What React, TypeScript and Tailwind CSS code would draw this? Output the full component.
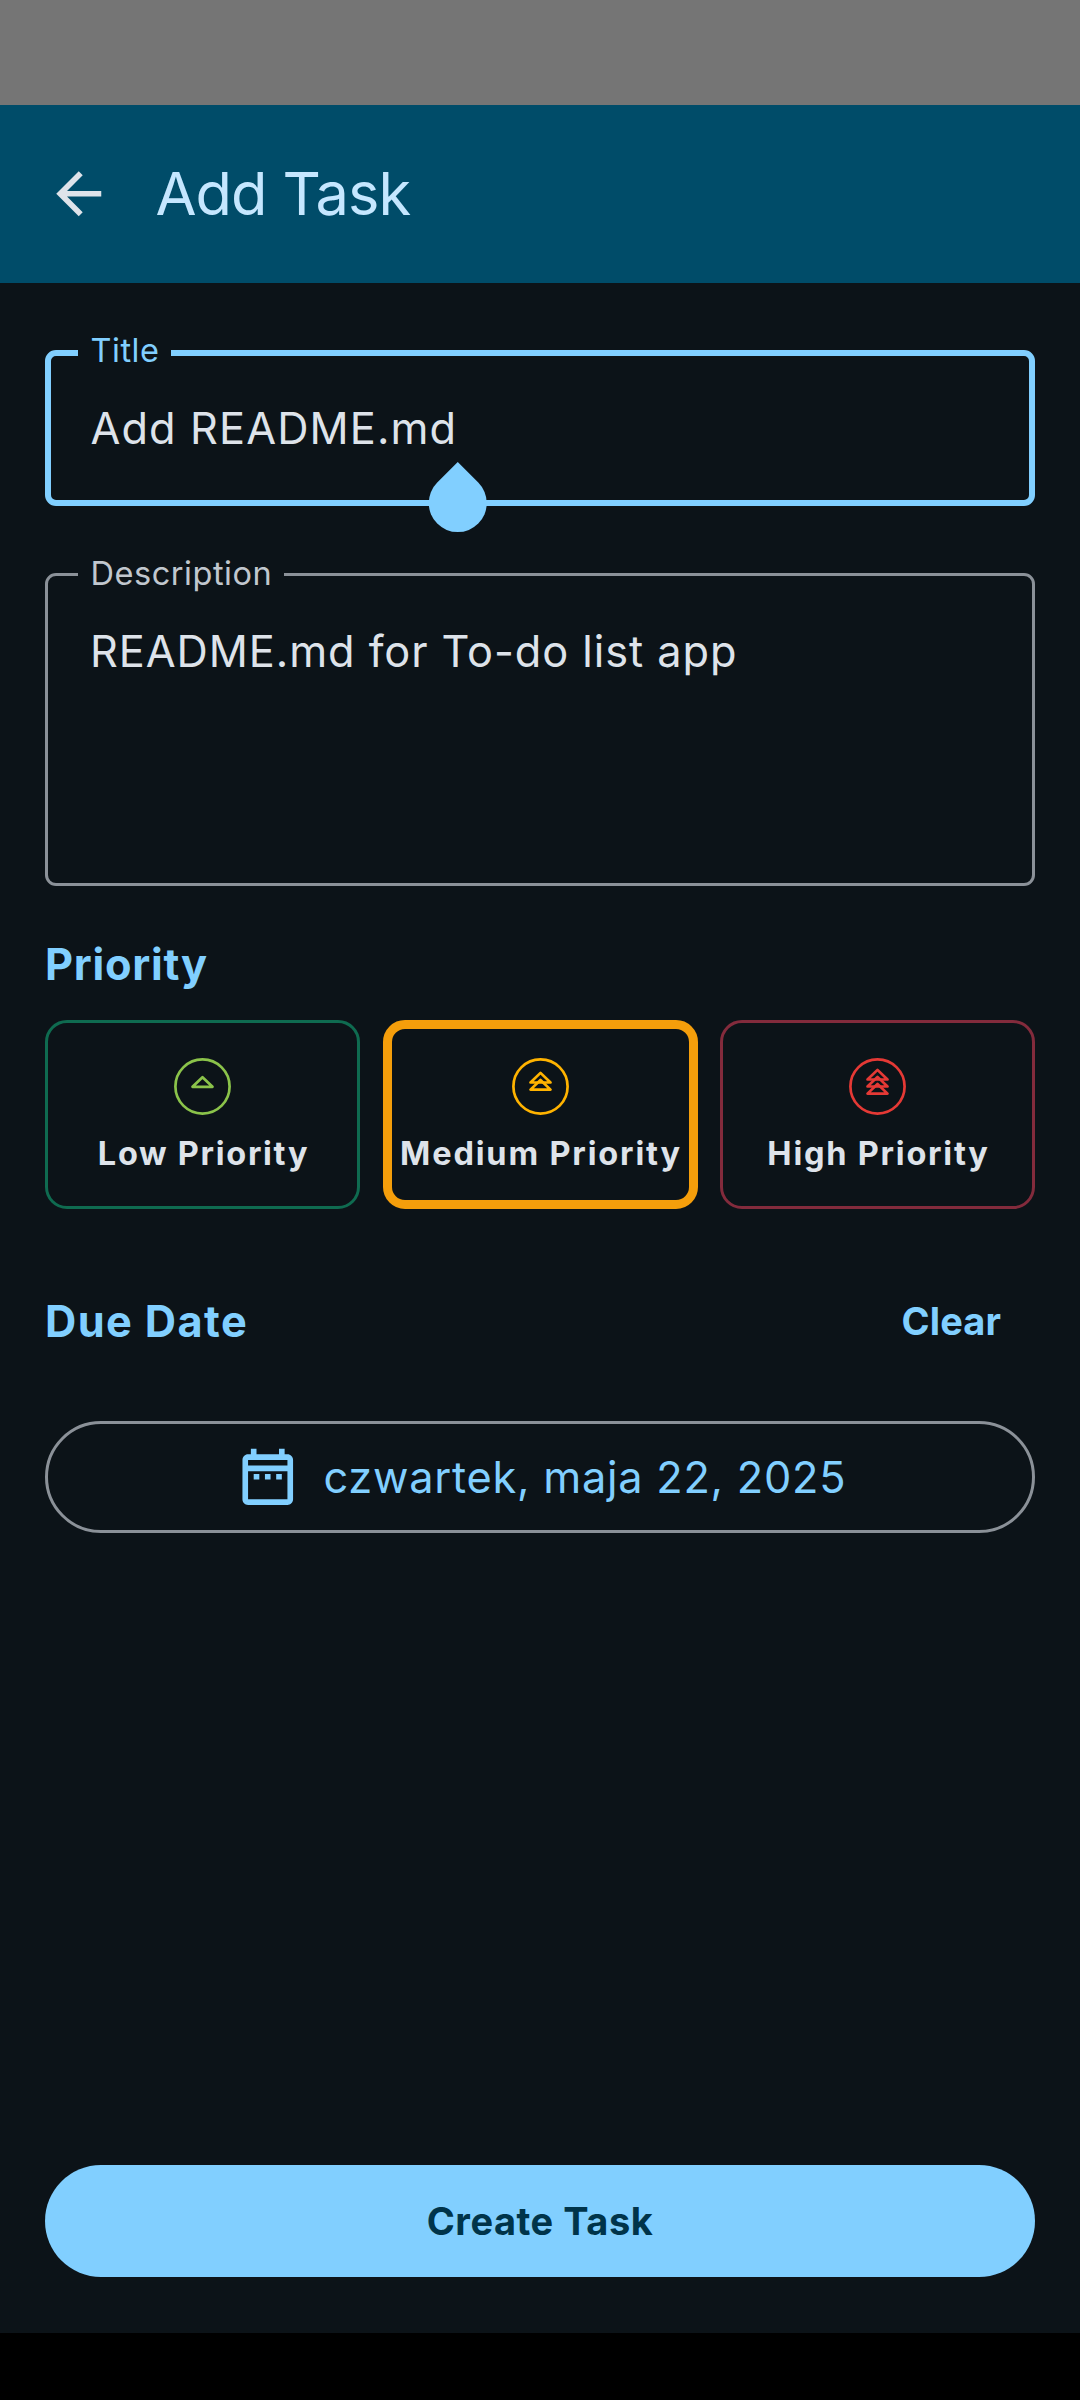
import clsx from 'clsx';

type PriorityOption = {
  label: string;
  card: string;
  icon: string;
  spacing: string;
  /** Baseline of every stacked triangle, in icon units. */
  bases: number[];
};

const PRIORITIES: PriorityOption[] = [
  {
    label: 'Low Priority',
    card: 'border-[3px] border-[#0f6b50]',
    icon: 'text-[#8bc34a]',
    spacing: 'tracking-[1.7px]',
    bases: [28.8],
  },
  {
    label: 'Medium Priority',
    card: 'border-[9px] border-[#f59e0b]',
    icon: 'text-[#ffb300]',
    spacing: 'tracking-[1.84px]',
    bases: [24.5, 31.6],
  },
  {
    label: 'High Priority',
    card: 'border-[3px] border-[#832b3c]',
    icon: 'text-[#e53935]',
    spacing: 'tracking-[1.77px]',
    bases: [21.5, 28.5, 35.6],
  },
];

function PriorityIcon({ bases, className }: { bases: number[]; className: string }) {
  return (
    <svg
      viewBox="0 0 57 57"
      className={clsx('size-[57px] shrink-0', className)}
      fill="none"
      stroke="currentColor"
      strokeWidth="2.7"
      strokeLinejoin="round"
    >
      <circle cx="28.5" cy="28.5" r="27.1" />
      {bases.map((y) => (
        <path key={y} d={`M28.5 ${y - 9.6}L38.5 ${y}H18.5Z`} />
      ))}
    </svg>
  );
}

function PriorityCard({ option }: { option: PriorityOption }) {
  return (
    <button
      className={clsx(
        'flex h-[189px] flex-col items-center justify-center gap-[19px] rounded-[22px] pt-[3px]',
        option.card,
      )}
    >
      <PriorityIcon bases={option.bases} className={option.icon} />
      <span
        className={clsx(
          'pl-0.5 text-[32.5px] leading-10 font-bold whitespace-nowrap text-[#dee3ea]',
          option.spacing,
        )}
      >
        {option.label}
      </span>
    </button>
  );
}

export default function App() {
  return (
    <div className="flex h-[2400px] w-[1080px] flex-col bg-[#0c1318] font-['Inter',sans-serif] text-[#dee3ea]">
      <div className="h-[105px] bg-[#757575]" />

      <header className="flex h-[178px] items-center gap-[43px] bg-[#004c69] pl-[45px]">
        <svg viewBox="0 0 24 24" className="size-[67.5px]" fill="currentColor">
          <path d="M20 11H7.83l5.59-5.59L12 4l-8 8 8 8 1.41-1.41L7.83 13H20v-2z" />
        </svg>
        <h1 className="pb-0.5 text-[59.5px] leading-[84px] tracking-[-0.93px] text-[#c5e7ff]">
          Add Task
        </h1>
      </header>

      <main className="flex flex-1 flex-col px-[45px] pt-[67px] pb-14">
        <div className="relative flex h-[156px] items-center rounded-[11px] border-[6px] border-[#81cfff] pl-[39.5px]">
          <label className="absolute -top-[25px] left-[27px] w-[93px] bg-[#0c1318] pl-[12.5px] text-[32.5px] leading-10 tracking-[0.54px] text-[#81cfff]">
            Title
          </label>
          <span className="text-[43.3px] leading-[68px] tracking-[1.12px]">Add README.md</span>
          {/* Text cursor handle */}
          <span className="absolute top-[117.5px] left-[377.75px] size-[57.5px] rotate-45 rounded-full rounded-tl-none bg-[#81cfff]" />
        </div>

        <div className="relative mt-[67px] h-[313px] rounded-[11px] border-[3px] border-[#8b9198] pt-[41px] pl-[42px]">
          <label className="absolute -top-[22px] left-[30px] w-[206px] bg-[#0c1318] pl-[12.5px] text-[32.5px] leading-10 tracking-[0.54px] text-[#c1c7ce]">
            Description
          </label>
          <p className="text-[43.3px] leading-[68px] tracking-[0.94px]">README.md for To-do list app</p>
        </div>

        <h2 className="mt-11 text-[43.3px] leading-[68px] font-bold tracking-[0.75px] text-[#81cfff]">
          Priority
        </h2>
        <div className="mt-[22px] grid grid-cols-3 gap-[22.5px]">
          {PRIORITIES.map((option) => (
            <PriorityCard key={option.label} option={option} />
          ))}
        </div>

        <div className="mt-[78px] flex items-center justify-between pr-[34px]">
          <h2 className="text-[43.3px] leading-[68px] font-bold tracking-[1.4px] text-[#81cfff]">
            Due Date
          </h2>
          <button className="text-[38px] leading-[68px] font-bold tracking-[0.1px] text-[#81cfff]">
            Clear
          </button>
        </div>

        <button className="mt-[66px] flex h-28 items-center gap-[22px] rounded-full border-[3px] border-[#8b9198] pl-[186px] text-[#81cfff]">
          <svg viewBox="0 0 24 24" className="size-[67.5px] shrink-0" fill="currentColor">
            <path d="M7 11h2v2H7v-2zm14-5v14c0 1.1-.9 2-2 2H5c-1.11 0-2-.9-2-2l.01-14c0-1.1.88-2 1.99-2h1V2h2v2h8V2h2v2h1c1.1 0 2 .9 2 2zM5 8h14V6H5v2zm14 12V10H5v10h14zm-4-7h2v-2h-2v2zm-4 0h2v-2h-2v2z" />
          </svg>
          <span className="text-[43.3px] leading-[68px] tracking-[0.76px] whitespace-nowrap">
            czwartek, maja 22, 2025
          </span>
        </button>

        <button className="mt-auto h-28 rounded-full bg-[#81cfff] text-[38px] font-bold tracking-[0.52px] text-[#00344a]">
          Create Task
        </button>
      </main>

      <div className="h-[67px] bg-black" />
    </div>
  );
}
